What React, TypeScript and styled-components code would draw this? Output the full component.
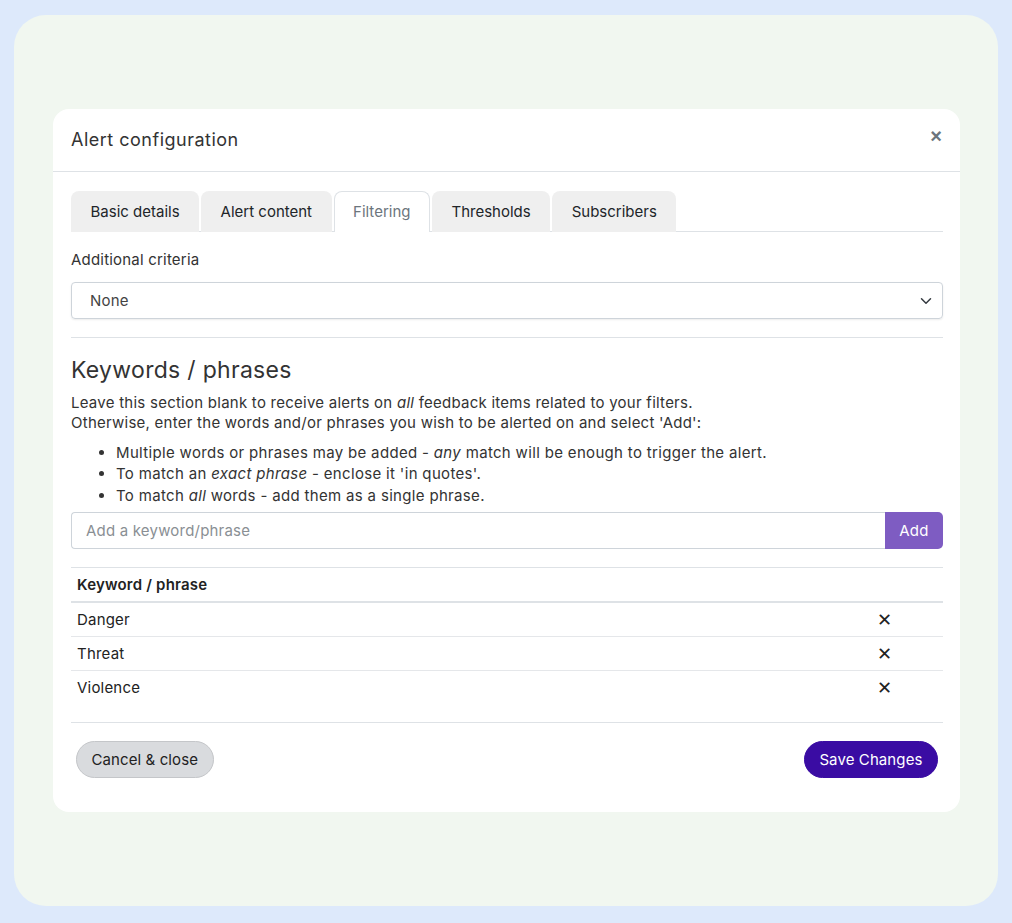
import React from "react";
import styled, { createGlobalStyle } from "styled-components";

const GlobalStyle = createGlobalStyle`
  body {
    margin: 0;
    background: #dde9fb;
    font-family: Inter, "Noto Sans", sans-serif;
    color: #212529;
  }
`;

const Backdrop = styled.div`
  box-sizing: border-box;
  margin: 15px 14px 17px 14px;
  height: 891px;
  border-radius: 32px;
  background: #f1f7f0;
  padding: 94px 38px 0 39px;
`;

const Modal = styled.div`
  background: #ffffff;
  border-radius: 16px;
  height: 703px;
  box-sizing: border-box;
`;

const Header = styled.div`
  display: flex;
  align-items: center;
  justify-content: space-between;
  height: 62px;
  padding: 0 18px;
  border-bottom: 1px solid #dee2e6;
`;

const Title = styled.h5`
  margin: 0 0 2px;
  font-size: 18px;
  font-weight: 400;
  letter-spacing: 0.5px;
  color: #333;
`;

const CloseButton = styled.button`
  border: none;
  background: none;
  color: #6c757d;
  font-size: 20px;
  font-weight: 700;
  padding: 0;
  margin-top: -8px;
  margin-right: 0;
  cursor: pointer;
`;

const Body = styled.div`
  padding: 19px 17px 0 18px;
`;

const TabList = styled.div`
  display: flex;
  gap: 2px;
  border-bottom: 1px solid #dee2e6;
`;

const Tab = styled.button<{ $active?: boolean }>`
  height: 41px;
  padding: 0 18.5px 2px;
  border: 1px solid ${(p) => (p.$active ? "#dee2e6" : "transparent")};
  border-bottom: none;
  border-top-left-radius: 8px;
  border-top-right-radius: 8px;
  background: ${(p) => (p.$active ? "#ffffff" : "#efefef")};
  color: ${(p) => (p.$active ? "#6c757d" : "#212529")};
  font-family: inherit;
  font-size: 15px;
  margin-bottom: -1px;
  cursor: pointer;
`;

const Label = styled.div`
  margin-top: 18px;
  font-size: 15px;
  line-height: 20px;
  letter-spacing: 0.2px;
  color: #333;
`;

const SelectBox = styled.div`
  margin-top: 12px;
  height: 37px;
  box-sizing: border-box;
  border: 1px solid #ced4da;
  border-radius: 4px;
  box-shadow: 0 1px 2px rgba(0, 0, 0, 0.08);
  display: flex;
  align-items: center;
  justify-content: space-between;
  padding: 0 10px 0 18px;
  font-size: 15px;
  letter-spacing: 0.2px;
  color: #444;
`;

const Divider = styled.hr<{ $gap: number }>`
  border: none;
  border-top: 1px solid #dee2e6;
  margin: ${(p) => p.$gap}px 0;
`;

const Heading = styled.h3`
  margin: 14px 0 0;
  font-size: 23px;
  font-weight: 400;
  line-height: 28px;
  letter-spacing: 0.3px;
  color: #333;
`;

const Para = styled.p`
  margin: 9px 0 0;
  font-size: 15px;
  line-height: 19.5px;
  letter-spacing: 0.25px;
  color: #333;
`;

const Bullets = styled.ul`
  margin: 10px 0 0;
  padding-left: 45px;
  font-size: 15px;
  line-height: 21.3px;
  letter-spacing: 0.33px;
  color: #333;
`;

const InputGroup = styled.div`
  display: flex;
  margin-top: 6px;
  height: 37px;
`;

const TextInput = styled.input`
  flex: 1;
  box-sizing: border-box;
  border: 1px solid #ced4da;
  border-right: none;
  border-radius: 4px 0 0 4px;
  padding: 0 14px;
  font-family: inherit;
  font-size: 15px;
  letter-spacing: 0.2px;
  color: #333;
  &::placeholder {
    color: #8a8f94;
  }
`;

const AddButton = styled.button`
  width: 58px;
  border: none;
  border-radius: 0 5px 5px 0;
  background: #7e5cc2;
  color: #fff;
  font-family: inherit;
  font-size: 15px;
  letter-spacing: 0.3px;
  cursor: pointer;
`;

const Table = styled.table`
  width: 100%;
  margin-top: 18px;
  border-collapse: collapse;
  font-size: 15px;
  letter-spacing: 0.2px;
  color: #222;
  border-top: 1px solid #dee2e6;
`;

const Th = styled.th`
  text-align: left;
  font-weight: 600;
  height: 33px;
  padding: 0 6px;
  border-bottom: 2px solid #dee2e6;
`;

const Td = styled.td<{ $center?: boolean }>`
  height: 33px;
  padding: 0 6px;
  text-align: ${(p) => (p.$center ? "center" : "left")};
`;

const Tr = styled.tr<{ $last?: boolean }>`
  td {
    border-bottom: ${(p) => (p.$last ? "none" : "1px solid #e5e7ea")};
  }
`;

const DeleteIcon = styled.span`
  font-size: 18px;
  color: #222;
  cursor: pointer;
`;

const Footer = styled.div`
  display: flex;
  justify-content: space-between;
  padding: 0 5px;
`;

const PillButton = styled.button<{ $primary?: boolean }>`
  height: 37px;
  border-radius: 19px;
  padding: 0 14.5px;
  font-family: inherit;
  font-size: 15px;
  letter-spacing: 0.1px;
  cursor: pointer;
  border: 1px solid ${(p) => (p.$primary ? "#3a0ca3" : "#c4c6c9")};
  background: ${(p) => (p.$primary ? "#3a0ca3" : "#d9dbde")};
  color: ${(p) => (p.$primary ? "#ffffff" : "#222")};
`;

const tabs = ["Basic details", "Alert content", "Filtering", "Thresholds", "Subscribers"];
const keywords = ["Danger", "Threat", "Violence"];

const Chevron = () => (
  <svg width="12" height="12" viewBox="0 0 16 16">
    <path d="M2 5l6 6 6-6" fill="none" stroke="#343a40" strokeWidth="2" strokeLinecap="round" strokeLinejoin="round" />
  </svg>
);

export default function App() {
  return (
    <>
      <GlobalStyle />
      <Backdrop>
        <Modal>
          <Header>
            <Title>Alert configuration</Title>
            <CloseButton>×</CloseButton>
          </Header>
          <Body>
            <TabList>
              {tabs.map((t) => (
                <Tab key={t} $active={t === "Filtering"}>
                  {t}
                </Tab>
              ))}
            </TabList>
            <Label>Additional criteria</Label>
            <SelectBox>
              <span>None</span>
              <Chevron />
            </SelectBox>
            <Divider $gap={18} />
            <Heading>Keywords / phrases</Heading>
            <Para>
              Leave this section blank to receive alerts on <em>all</em> feedback items related to your filters.
              <br />
              Otherwise, enter the words and/or phrases you wish to be alerted on and select 'Add':
            </Para>
            <Bullets>
              <li>
                Multiple words or phrases may be added - <em>any</em> match will be enough to trigger the alert.
              </li>
              <li>
                To match an <em>exact phrase</em> - enclose it 'in quotes'.
              </li>
              <li>
                To match <em>all</em> words - add them as a single phrase.
              </li>
            </Bullets>
            <InputGroup>
              <TextInput placeholder="Add a keyword/phrase" />
              <AddButton>Add</AddButton>
            </InputGroup>
            <Table>
              <thead>
                <tr>
                  <Th>Keyword / phrase</Th>
                  <Th style={{ width: 105 }} />
                </tr>
              </thead>
              <tbody>
                {keywords.map((k, i) => (
                  <Tr key={k} $last={i === keywords.length - 1}>
                    <Td>{k}</Td>
                    <Td $center>
                      <DeleteIcon>✕</DeleteIcon>
                    </Td>
                  </Tr>
                ))}
              </tbody>
            </Table>
            <Divider $gap={18} />
            <Footer>
              <PillButton>Cancel &amp; close</PillButton>
              <PillButton $primary>Save Changes</PillButton>
            </Footer>
          </Body>
        </Modal>
      </Backdrop>
    </>
  );
}
